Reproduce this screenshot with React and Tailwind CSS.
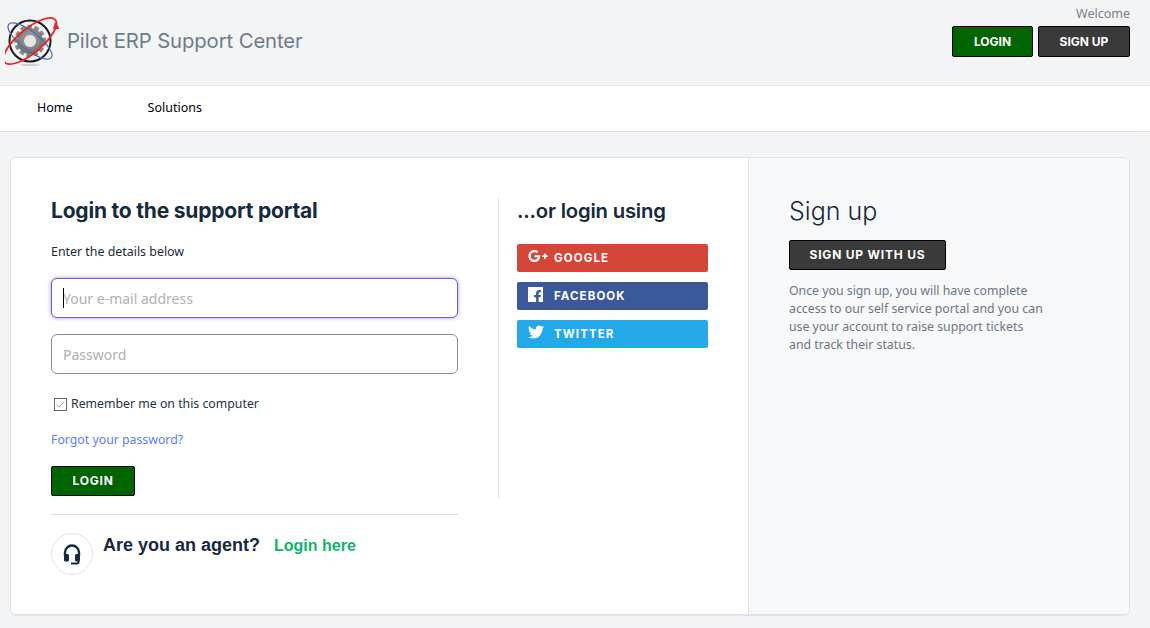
import React from 'react';
import { FaFacebookF, FaGooglePlusG, FaTwitter } from 'react-icons/fa';
import { Check } from 'lucide-react';

const BODY = "font-['Noto_Sans',sans-serif]";
const HEAD = "font-['Inter',sans-serif]";

const SOCIAL = [
  { name: 'GOOGLE', bg: 'bg-[#d44638]', icon: <FaGooglePlusG className="w-[20px] h-[20px] -mt-1" /> },
  {
    name: 'FACEBOOK',
    bg: 'bg-[#3b5998]',
    icon: (
      <span className="w-[15px] h-[15px] -mt-1 bg-white flex items-end justify-end overflow-hidden">
        <FaFacebookF className="w-[13px] h-[13px] text-[#3b5998] -mb-px -mr-px" />
      </span>
    ),
  },
  { name: 'TWITTER', bg: 'bg-[#23a9e8]', icon: <FaTwitter className="w-[16px] h-[16px] -mt-1" /> },
];

function Logo() {
  return (
    <svg width="54" height="54" viewBox="0 0 54 54" fill="none">
      <defs>
        <radialGradient id="gear" cx="0.5" cy="0.4" r="0.6">
          <stop offset="0" stopColor="#a8a8a8" />
          <stop offset="1" stopColor="#6e6e6e" />
        </radialGradient>
      </defs>
      <circle cx="25" cy="27" r="20.5" stroke="#1c1c1c" strokeWidth="2" />
      <circle cx="25" cy="27" r="14" stroke="#8a8a8a" strokeWidth="4" strokeDasharray="4.5 2.5" />
      <circle cx="25" cy="27" r="13" fill="url(#gear)" />
      <circle cx="25" cy="27" r="6" fill="#e6e6e6" />
      <ellipse cx="25" cy="27" rx="27" ry="9" transform="rotate(38 25 27)" stroke="#4a6fb0" strokeWidth="1.3" />
      <ellipse cx="25" cy="27" rx="33" ry="12" transform="rotate(-40 25 27)" stroke="#ee2222" strokeWidth="1.8" />
      <path d="M50 8l5 7-7 0z" fill="#ee2222" />
      <ellipse cx="25" cy="51" rx="10" ry="1" fill="#cfcfcf" />
    </svg>
  );
}

function HeadsetIcon() {
  return (
    <svg width="20" height="22" viewBox="0 0 20 22" fill="none">
      <path d="M3 13V9.5a7 7 0 0 1 14 0V13" stroke="#17293d" strokeWidth="2.4" />
      <rect x="2" y="11" width="5" height="7.5" rx="1.5" fill="#17293d" />
      <rect x="13" y="11" width="5" height="7.5" rx="1.5" fill="#17293d" />
      <path d="M16.5 17v2a1.5 1.5 0 0 1-1.5 1.5H9" stroke="#17293d" strokeWidth="2" />
    </svg>
  );
}

export default function App() {
  return (
    <div className={`${BODY} h-[628px] overflow-hidden bg-[#f3f4f6] text-[#1b2a3a]`}>
      <header className="h-[86px] border-b border-[#e6e7ea] flex justify-between pl-[5px] pr-5">
        <div className="flex items-center gap-2 pb-[3px]">
          <Logo />
          <span className={`${HEAD} text-[20.3px] text-[#6e7b8b] tracking-[-0.1px]`}>Pilot ERP Support Center</span>
        </div>
        <div className="flex flex-col items-end pt-[5px]">
          <span className="text-[12.5px] leading-[18px] text-[#76808c]">Welcome</span>
          <div className="flex gap-[5px] mt-[3px]">
            <button className={`${HEAD} w-[81px] h-[31px] bg-[#006400] border border-black rounded-[2px] text-white text-xs font-bold`}>LOGIN</button>
            <button className={`${HEAD} w-[92px] h-[31px] bg-[#3a3a3a] border border-black rounded-[2px] text-white text-xs font-bold`}>SIGN UP</button>
          </div>
        </div>
      </header>

      <nav className="h-[46px] bg-white border-b border-[#dcdfe3] flex items-center pl-[37px] pb-px gap-[75px] text-[12.5px] text-black">
        <span>Home</span>
        <span>Solutions</span>
      </nav>

      <main className="ml-[10px] mr-5 mt-[25px] h-[459px] flex bg-white border border-[#dfe2e6] border-b-2 rounded-[6px] overflow-hidden">
        <section className="w-[737px] pt-[39px] pl-10 flex">
          <div className="w-[407px]">
            <h2 className={`${HEAD} text-[21px] leading-[28px] font-bold tracking-[-0.2px] text-[#17293d]`}>Login to the support portal</h2>
            <p className="mt-[18px] text-[12.4px] leading-[18px]">Enter the details below</p>

            <div className="relative mt-[17px]">
              <input
                placeholder="Your e-mail address"
                className="w-full h-10 pl-[11px] pr-3 bg-white border border-[#6d5dc8] rounded-[6px] shadow-[0_0_4px_#a79fe0] text-[14px] outline-none placeholder:text-[#b0b0b0]"
              />
              <span className="absolute left-[12px] top-[10px] w-px h-5 bg-black" />
            </div>
            <input
              placeholder="Password"
              className="block w-full h-10 mt-4 pl-[11px] pr-3 bg-white border border-[#8c8c8c] rounded-[6px] text-[14px] outline-none placeholder:text-[#b0b0b0]"
            />

            <label className="mt-[21px] flex items-center h-[18px] text-[12.3px] text-[#25313f]">
              <span className="ml-[3px] mr-[4px] w-[13px] h-[13px] border border-[#666] flex items-center justify-center">
                <Check className="w-[11px] h-[11px] text-[#777]" strokeWidth={1.5} />
              </span>
              Remember me on this computer
            </label>
            <a className="block mt-[18px] text-[12.3px] leading-[18px] text-[#5c7cff]">Forgot your password?</a>
            <button className={`${HEAD} block mt-[17px] w-[84px] h-[30px] bg-[#006400] border border-black rounded-[2px] text-white text-xs font-bold tracking-[0.8px]`}>LOGIN</button>

            <div className="mt-[18px] pt-[18px] border-t border-[#dcdcdc] flex">
              <div className="w-[42px] h-[42px] rounded-full border border-[#e4e4e4] flex items-center justify-center">
                <HeadsetIcon />
              </div>
              <div className="ml-[10px] -mt-[1px] font-['Liberation_Sans',sans-serif] font-bold">
                <span className="text-[18px] leading-[26px] text-[#17293d]">Are you an agent?</span>
                <span className="ml-[14px] text-[16px] text-[#0fb36f]">Login here</span>
              </div>
            </div>
          </div>

          <div className="ml-10 h-[301px] border-l border-[#e5e5e5] pl-[18px] w-[210px]">
            <h2 className={`${HEAD} text-[20.3px] leading-[28px] font-semibold tracking-[-0.2px] text-[#17293d]`}>...or login using</h2>
            <div className="mt-[19px] flex flex-col gap-[10px]">
              {SOCIAL.map((s) => (
                <div key={s.name} className={`${s.bg} h-[28px] w-[191px] rounded-[2px] flex items-center text-white`}>
                  <span className="w-[37px] pl-[11px] flex">{s.icon}</span>
                  <span className={`${HEAD} pt-[2px] text-[11.5px] font-bold tracking-[1.1px]`}>{s.name}</span>
                </div>
              ))}
            </div>
          </div>
        </section>

        <aside className="flex-1 bg-[#f7f8fa] border-l border-[#dfe2e6] pt-[35px] pl-10">
          <h2 className={`${HEAD} text-[25px] leading-[36px] font-light text-[#17293d]`}>Sign up</h2>
          <button className={`${HEAD} mt-[11px] w-[157px] h-[30px] bg-[#3a3a3a] border border-black rounded-[2px] text-white text-xs font-bold tracking-[0.8px]`}>SIGN UP WITH US</button>
          <p className="mt-[12px] w-[258px] text-[12.3px] leading-[18px] text-[#6b7685]">
            Once you sign up, you will have complete access to our self service portal and you can use your account to raise support tickets and track their status.
          </p>
        </aside>
      </main>
    </div>
  );
}
